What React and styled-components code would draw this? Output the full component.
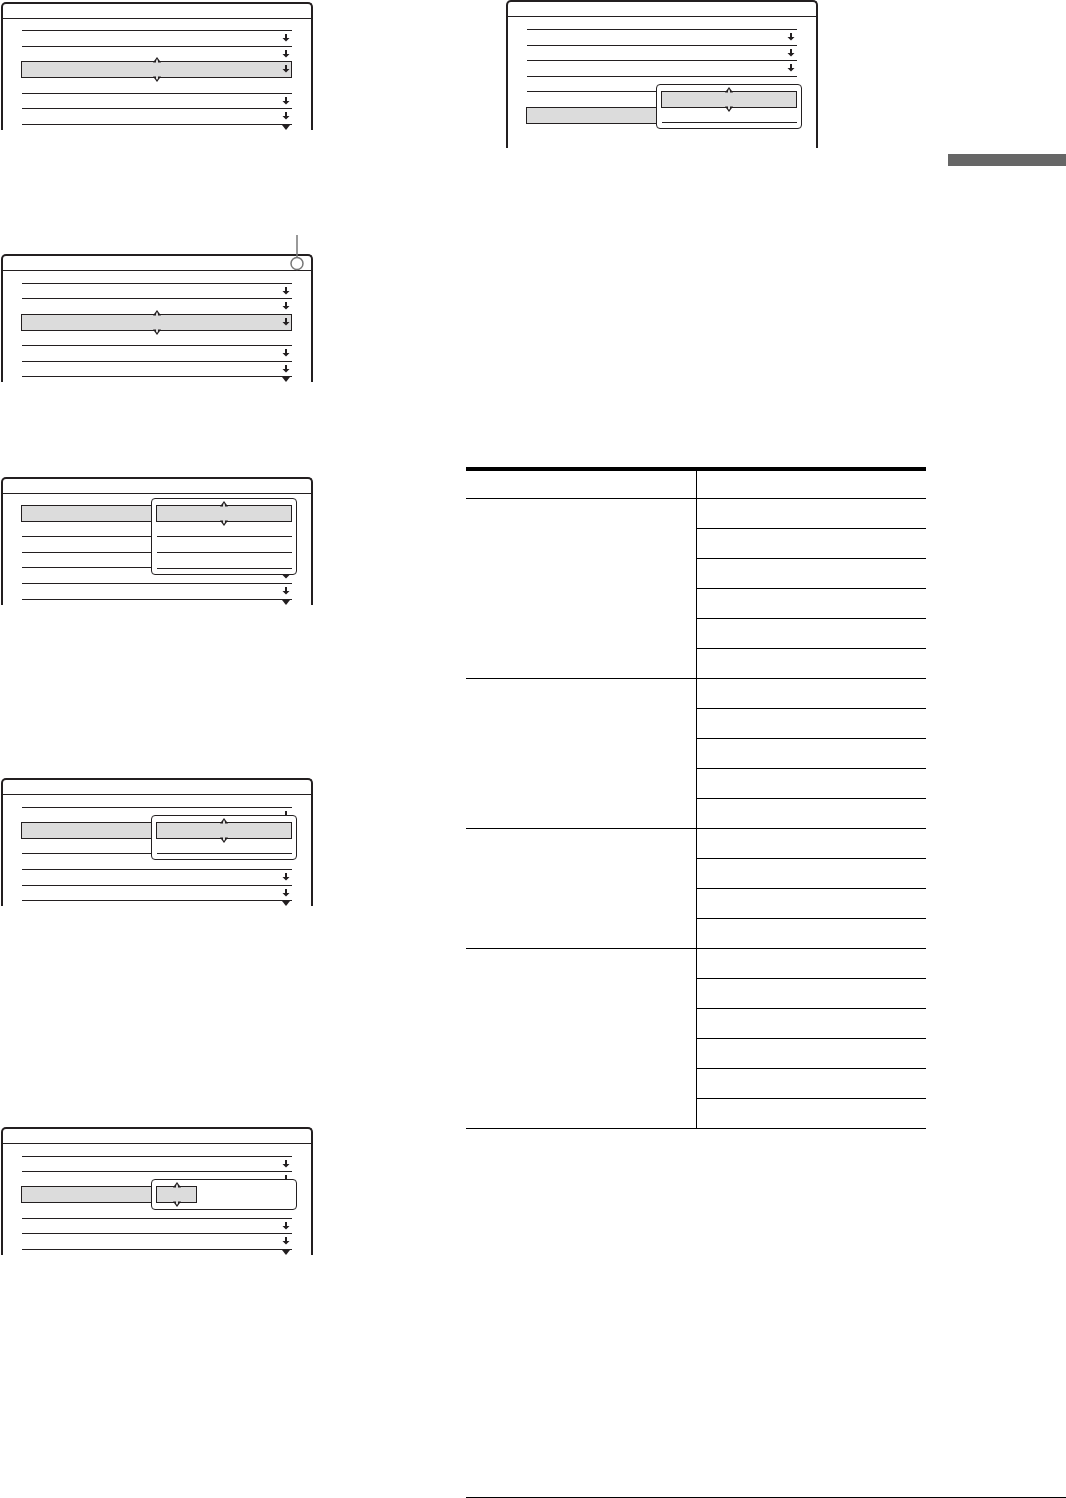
import React from 'react';
import styled, { createGlobalStyle } from 'styled-components';

const ink = '#231f20';

const Global = createGlobalStyle`
  * { box-sizing: border-box; }
  body { margin: 0; background: #fff; font-family: "Liberation Sans", Arial, sans-serif; }
`;

const Page = styled.main`
  display: grid;
  grid-template-columns: minmax(314px, 466fr) minmax(460px, 600fr);
  min-height: 100vh;
`;

const Figures = styled.section`
  display: flex;
  flex-direction: column;
  padding: 2px 0 0 1px;
`;

const Content = styled.section`
  display: flex;
  flex-direction: column;
`;

const Screen = styled.figure`
  position: relative;
  width: 312px;
  height: ${(p) => p.$height || 128}px;
  margin: ${(p) => p.$before || 0}px 0 0 ${(p) => p.$indent || 0}px;
  border: 2px solid ${ink};
  border-bottom: 0;
  border-radius: 5px 5px 0 0;
`;

const TitleBar = styled.header`
  height: 15px;
  border-bottom: 1px solid ${ink};
`;

const Rows = styled.ul`
  list-style: none;
  margin: 0;
  padding: ${(p) => (p.$tight ? 11 : 12)}px 19px 0;
  height: calc(100% - 15px);
  overflow: hidden;
`;

const Row = styled.li`
  position: relative;
  display: flex;
  justify-content: flex-end;
  align-items: center;
  height: ${(p) => p.$height}px;
  padding: 0 2px 1px 0;
  border-top: 1px solid ${(p) => (p.$plain ? 'transparent' : ink)};
`;

const SelectedRow = styled(Row)`
  height: ${(p) => p.$height + 1}px;
  margin: 0 0 -1px -1px;
  padding-right: 1px;
  border: 1px solid ${ink};
  background: #dcdcdc;
  z-index: 1;
`;

const Popup = styled.div`
  position: absolute;
  top: ${(p) => p.$top}px;
  left: 129px;
  width: 146px;
  padding: 6px 4px;
  border: 1px solid ${ink};
  border-radius: 4px;
  background: #fff;
`;

const Option = styled.div`
  position: relative;
  width: ${(p) => (p.$short ? '41px' : '100%')};
  height: 17px;
  border: 1px solid ${ink};
  background: #dcdcdc;
`;

const OptionLines = styled.div`
  margin: -1px 0 -1px 1px;
`;

const OptionLine = styled.div`
  height: 16px;
  border-bottom: 1px solid ${ink};
`;

const Chevron = styled.svg`
  position: absolute;
  left: calc(50% - 4px);
  ${(p) => (p.$down ? 'bottom: -5px; transform: scaleY(-1);' : 'top: -5px;')}
`;

const Callout = styled.svg`
  position: absolute;
  top: -21px;
  right: 7px;
`;

const SectionTab = styled.div`
  align-self: flex-end;
  width: 118px;
  height: 12px;
  margin-top: 6px;
  background: #666;
`;

const Table = styled.table`
  width: 460px;
  margin-top: 301px;
  border-top: 4px solid #000;
  border-collapse: separate;
  border-spacing: 0;
  table-layout: fixed;
`;

const Cell = styled.td`
  height: 30px;
  padding: 0;
  border-bottom: 1px solid #000;
  ${(p) => p.$divided && 'border-left: 1px solid #000;'}
`;

const HeadCell = styled(Cell)`
  height: 28px;
`;

const Footer = styled.footer`
  margin-top: auto;
  border-bottom: 1px solid #000;
`;

const Arrow = () => (
  <svg width="8" height="8" viewBox="0 0 8 8" aria-hidden="true">
    <path d="M3 0h2v4h2.5L4 7.5.5 4H3z" fill={ink} />
  </svg>
);

const Triangle = () => (
  <svg width="8" height="5" viewBox="0 0 8 5" aria-hidden="true">
    <path d="M0 0h8L4 5z" fill={ink} />
  </svg>
);

const Handle = ({ down }) => (
  <Chevron $down={down} width="8" height="6" viewBox="0 0 8 6" aria-hidden="true">
    <path d="M0 5.5 4 0l4 5.5z" fill={ink} />
    <path d="M3 6V3.5l1-1.5 1 1.5V6z" fill="#dcdcdc" />
  </Chevron>
);

const Handles = () => (
  <>
    <Handle />
    <Handle down />
  </>
);

function Choice({ top, lines = 0, short }) {
  return (
    <Popup $top={top}>
      <Option $short={short}><Handles /></Option>
      {lines > 0 && (
        <OptionLines>
          {Array.from({ length: lines }, (_, i) => <OptionLine key={i} />)}
        </OptionLines>
      )}
    </Popup>
  );
}

/* Each row is [kind, height]; kinds: arrow, line, blank, end, selected, menu */
function Setup({ rows, menu, callout, tight, ...frame }) {
  return (
    <Screen {...frame}>
      <TitleBar />
      <Rows $tight={tight}>
        {rows.map(([kind, height], i) => {
          if (kind === 'selected') {
            return <SelectedRow key={i} $height={height}><Handles /><Arrow /></SelectedRow>;
          }
          if (kind === 'menu') {
            return <SelectedRow key={i} $height={height}><Choice {...menu} /></SelectedRow>;
          }
          return (
            <Row key={i} $height={height} $plain={kind === 'blank'}>
              {kind === 'arrow' && <Arrow />}
              {kind === 'end' && <Triangle />}
            </Row>
          );
        })}
      </Rows>
      {callout && (
        <Callout width="14" height="36" viewBox="0 0 14 36" aria-hidden="true">
          <path d="M7 0v23" stroke="#777" strokeWidth="1.5" />
          <circle cx="7" cy="28.5" r="6" fill="none" stroke="#777" strokeWidth="1.5" />
        </Callout>
      )}
    </Screen>
  );
}

const first = [['arrow', 16], ['arrow', 15], ['selected', 16], ['blank', 16], ['arrow', 15], ['arrow', 16], ['end', 7]];
const second = [['arrow', 15], ['arrow', 16], ['selected', 16], ['blank', 15], ['arrow', 16], ['arrow', 15], ['end', 7]];
const third = [['menu', 16], ['blank', 15], ['line', 16], ['line', 15], ['arrow', 16], ['arrow', 16], ['end', 7]];
const fourth = [['arrow', 15], ['menu', 16], ['blank', 15], ['line', 16], ['arrow', 16], ['arrow', 15], ['end', 7]];
const fifth = [['arrow', 15], ['arrow', 15], ['menu', 16], ['blank', 16], ['arrow', 15], ['arrow', 16], ['end', 7]];
const sixth = [['arrow', 16], ['arrow', 15], ['arrow', 16], ['line', 15], ['line', 16], ['menu', 16]];

const groups = [6, 5, 4, 6];

export default function App() {
  return (
    <Page>
      <Global />
      <Figures>
        <Setup rows={first} tight />
        <Setup rows={second} $before={124} callout />
        <Setup rows={third} $before={95} tight menu={{ top: -8, lines: 3 }} />
        <Setup rows={fourth} $before={173} menu={{ top: -8, lines: 1 }} />
        <Setup rows={fifth} $before={221} menu={{ top: -8, short: true }} />
      </Figures>
      <Content>
        <Setup rows={sixth} $height={148} $indent={40} menu={{ top: -24, lines: 1 }} />
        <SectionTab />
        <Table>
          <thead>
            <tr>
              <HeadCell as="th" />
              <HeadCell as="th" $divided />
            </tr>
          </thead>
          {groups.map((count, g) => (
            <tbody key={g}>
              {Array.from({ length: count }, (_, i) => (
                <tr key={i}>
                  {i === 0 && <Cell rowSpan={count} />}
                  <Cell $divided />
                </tr>
              ))}
            </tbody>
          ))}
        </Table>
        <Footer />
      </Content>
    </Page>
  );
}
